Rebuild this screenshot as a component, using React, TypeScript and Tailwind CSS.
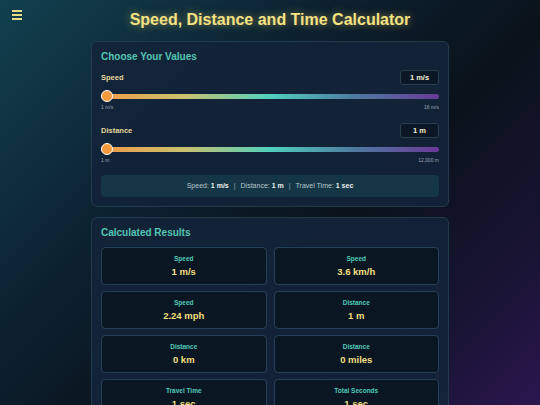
import React from "react";

const Slider = ({ min, max }: { min: string; max: string }) => (
  <div className="mt-[5px]">
    <div className="relative h-[12px] flex items-center">
      <div className="h-[5px] w-full rounded-full bg-[linear-gradient(90deg,#f29a45_0%,#c9c270_25%,#4fd1bd_50%,#4d7aa0_75%,#6a3a98_100%)]" />
      <div className="absolute left-0 top-0 h-[12px] w-[12px] rounded-full bg-[#f59a3c] border-[1.5px] border-white" />
    </div>
    <div className="flex justify-between text-[5px] text-[#9aa8b8] mt-[2px] leading-[6px]">
      <span>{min}</span>
      <span>{max}</span>
    </div>
  </div>
);

const Field = ({ label, value, min, max }: { label: string; value: string; min: string; max: string }) => (
  <div>
    <div className="flex items-center justify-between">
      <span className="text-[7.5px] font-bold text-[#e6d89a]">{label}</span>
      <div className="w-[39px] h-[15px] rounded-[3px] bg-[#0b1724] border border-[#28404e] flex items-center justify-center text-[7.5px] font-bold text-[#f3efd8]">
        {value}
      </div>
    </div>
    <Slider min={min} max={max} />
  </div>
);

const Result = ({ label, value }: { label: string; value: string }) => (
  <div className="h-[38px] rounded-[4px] bg-[#0a1723] border border-[#27405a] flex flex-col items-center justify-center">
    <span className="text-[6.5px] font-bold text-[#4ec9b6] leading-[8px]">{label}</span>
    <span className="text-[9.5px] font-bold text-[#f3df7e] leading-[12px] mt-[3px]">{value}</span>
  </div>
);

export default function App() {
  return (
    <div className="relative w-[540px] h-[405px] overflow-hidden bg-[linear-gradient(135deg,#12404f_0%,#0c2130_35%,#0a121b_60%,#1a1436_85%,#2b1650_100%)] font-['Liberation_Sans',Arial,sans-serif]">
      <div className="relative">
        <div className="absolute left-[12px] top-[10px] flex flex-col gap-[2.5px]">
          <div className="w-[10px] h-[1.5px] bg-[#e9dc86]" />
          <div className="w-[10px] h-[1.5px] bg-[#e9dc86]" />
          <div className="w-[10px] h-[1.5px] bg-[#e9dc86]" />
        </div>
        <h1 className="text-center pt-[10px] text-[16px] leading-[20px] font-bold text-[#f5e283] [text-shadow:0_0_8px_rgba(245,215,100,0.55)]">
          Speed, Distance and Time Calculator
        </h1>
        <div className="mx-auto w-[358px] mt-[11px] rounded-[6px] bg-[#13233a]/90 border border-[#223a4c] px-[9px] pt-[9px] pb-[9px]">
          <h2 className="text-[10px] font-bold text-[#54c5b4] leading-[12px]">Choose Your Values</h2>
          <div className="mt-[7px]">
            <Field label="Speed" value="1 m/s" min="1 m/s" max="16 m/s" />
          </div>
          <div className="mt-[13px]">
            <Field label="Distance" value="1 m" min="1 m" max="12,000 m" />
          </div>
          <div className="mt-[12px] h-[22px] rounded-[4px] bg-[#153646] flex items-center justify-center text-[7px] text-[#b9c6cf]">
            <span>Speed: <b className="text-[#eef0f0]">1 m/s</b></span>
            <span className="mx-[5px] text-[#8ea0ab]">|</span>
            <span>Distance: <b className="text-[#eef0f0]">1 m</b></span>
            <span className="mx-[5px] text-[#8ea0ab]">|</span>
            <span>Travel Time: <b className="text-[#eef0f0]">1 sec</b></span>
          </div>
        </div>
        <div className="mx-auto w-[358px] mt-[10px] rounded-[6px] bg-[#13233a]/90 border border-[#223a4c] px-[9px] pt-[9px] pb-[10px]">
          <h2 className="text-[10px] font-bold text-[#54c5b4] leading-[12px]">Calculated Results</h2>
          <div className="mt-[8px] grid grid-cols-2 gap-x-[7px] gap-y-[6px]">
            <Result label="Speed" value="1 m/s" />
            <Result label="Speed" value="3.6 km/h" />
            <Result label="Speed" value="2.24 mph" />
            <Result label="Distance" value="1 m" />
            <Result label="Distance" value="0 km" />
            <Result label="Distance" value="0 miles" />
            <Result label="Travel Time" value="1 sec" />
            <Result label="Total Seconds" value="1 sec" />
          </div>
        </div>
      </div>
    </div>
  );
}
